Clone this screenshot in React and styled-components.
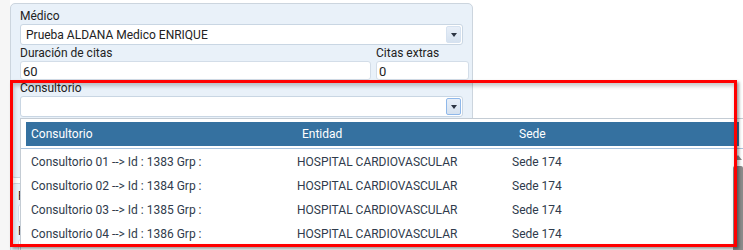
import React from 'react';
import styled, { createGlobalStyle } from 'styled-components';

const GlobalStyle = createGlobalStyle`
    html, body {
        margin: 0;
        padding: 0;
        background: #ffffff;
        font-family: Roboto, "Liberation Sans", Arial, sans-serif;
        font-size: 12px;
        color: #222222;
        overflow: hidden;
    }
`;

const Page = styled.div`
    position: relative;
    width: 743px;
    height: 250px;
    overflow: hidden;
    padding: 3px 0 0 10px;
    box-sizing: border-box;
    background: linear-gradient(to right, #f6f6f6 0, #f6f6f6 10px, #ffffff 10px);
`;

const Panel = styled.div`
    width: 463px;
    box-sizing: border-box;
    background: #e9f1f9;
    border: 1px solid #ccd5de;
    border-radius: 5px;
    padding: ${(p) => p.$pad || '4px 3px 8px 9px'};
    margin-bottom: 5px;
`;

const Label = styled.div`
    height: 16px;
    line-height: 16px;
    white-space: nowrap;
`;

const Row = styled.div`
    display: grid;
    grid-template-columns: 1fr 93px;
    gap: 5px;
`;

const Select = styled.div`
    display: flex;
    align-items: center;
    height: 21px;
    margin-right: 6px;
    box-sizing: border-box;
    background: #ffffff;
    border: 1px solid #c9d6e3;
    border-radius: 3px;
    padding: 0 1px 0 5px;
`;

const SelectText = styled.span`
    flex: 1;
    white-space: nowrap;
`;

const DropButton = styled.span`
    display: flex;
    align-items: center;
    justify-content: center;
    width: 15px;
    height: 17px;
    box-sizing: border-box;
    border-radius: 2px;
    background: linear-gradient(#e8eff8, #d6e2f0);
    border: 1px solid ${(p) => (p.$active ? '#8fb8ea' : '#d6e2f0')};
    &::after {
        content: '';
        border-left: 3.5px solid transparent;
        border-right: 3.5px solid transparent;
        border-top: 4px solid #2b3442;
    }
`;

const TextInput = styled.div`
    height: 19px;
    line-height: 19px;
    box-sizing: border-box;
    background: #ffffff;
    border: 1px solid #d3dde8;
    border-radius: 3px;
    padding: 0 2px;
    font-size: 13px;
`;

const Popup = styled.div`
    position: absolute;
    left: 20px;
    top: 118px;
    right: 0;
    bottom: 0;
    background: #ffffff;
    border-top: 1px solid #c4ccd4;
    border-left: 1px solid #c4ccd4;
    display: flex;
    flex-direction: column;
`;

const HeaderBar = styled.div`
    display: grid;
    grid-template-columns: 270px 217px 1fr;
    align-items: center;
    height: 24px;
    margin: 3px 4px 0 5px;
    background: #3571a0;
    color: #ffffff;
`;

const HeaderCell = styled.div`
    padding-left: ${(p) => p.$pad}px;
    white-space: nowrap;
`;

const Divider = styled.div`
    height: 1px;
    margin-top: 2px;
    background: #a9c3de;
`;

const Body = styled.div`
    flex: 1;
    display: flex;
`;

const List = styled.div`
    flex: 1;
    padding-top: 1px;
`;

const ListRow = styled.div`
    display: grid;
    grid-template-columns: 266px 215px 1fr;
    align-items: center;
    height: 24px;
    color: #2f3b4c;
    padding-left: 10px;
    white-space: nowrap;
`;

const ScrollBar = styled.div`
    width: 10px;
    display: flex;
    flex-direction: column;
    align-items: center;
    padding-top: 6px;
    &::before {
        content: '';
        border-left: 4px solid transparent;
        border-right: 4px solid transparent;
        border-bottom: 5px solid #8a8a8a;
    }
    &::after {
        content: '';
        flex: 1;
        width: 10px;
        margin-top: 6px;
        border-radius: 2px 2px 0 0;
        background: #8b8b8b;
    }
`;

const Highlight = styled.div`
    position: absolute;
    left: 10px;
    top: 80px;
    width: 727px;
    height: 167px;
    box-sizing: border-box;
    border: 3px solid #ff0000;
    box-shadow: 2px 2px 3px rgba(0, 0, 0, 0.4), inset 1px 3px 4px rgba(0, 0, 0, 0.22);
    pointer-events: none;
`;

const rows = [
    { name: 'Consultorio 01 --> Id : 1383 Grp :' },
    { name: 'Consultorio 02 --> Id : 1384 Grp :' },
    { name: 'Consultorio 03 --> Id : 1385 Grp :' },
    { name: 'Consultorio 04 --> Id : 1386 Grp :' },
];

const App = () => (
    <>
        <GlobalStyle />
        <Page>
            <Panel $pad="4px 3px 23px 9px">
                <Label>Médico</Label>
                <Select>
                    <SelectText>Prueba ALDANA Medico ENRIQUE</SelectText>
                    <DropButton />
                </Select>
                <Row>
                    <div>
                        <Label>Duración de citas</Label>
                        <TextInput>60</TextInput>
                    </div>
                    <div>
                        <Label>Citas extras</Label>
                        <TextInput>0</TextInput>
                    </div>
                </Row>
                <Label>Consultorio</Label>
                <Select>
                    <SelectText />
                    <DropButton $active />
                </Select>
                <Label>Especialidad</Label>
                <Select>
                    <SelectText />
                    <DropButton />
                </Select>
            </Panel>
            <Panel $pad="4px 3px 8px 7px">
                <Label>Fecha inicial</Label>
                <TextInput />
                <Label>Fecha final</Label>
                <TextInput />
            </Panel>

            <Popup>
                <HeaderBar>
                    <HeaderCell $pad={5}>Consultorio</HeaderCell>
                    <HeaderCell $pad={6}>Entidad</HeaderCell>
                    <HeaderCell $pad={6}>Sede</HeaderCell>
                </HeaderBar>
                <Divider />
                <Body>
                    <List>
                        {rows.map((r) => (
                            <ListRow key={r.name}>
                                <span>{r.name}</span>
                                <span>HOSPITAL CARDIOVASCULAR</span>
                                <span>Sede 174</span>
                            </ListRow>
                        ))}
                    </List>
                    <ScrollBar />
                </Body>
            </Popup>

            <Highlight />
        </Page>
    </>
);

export default App;
